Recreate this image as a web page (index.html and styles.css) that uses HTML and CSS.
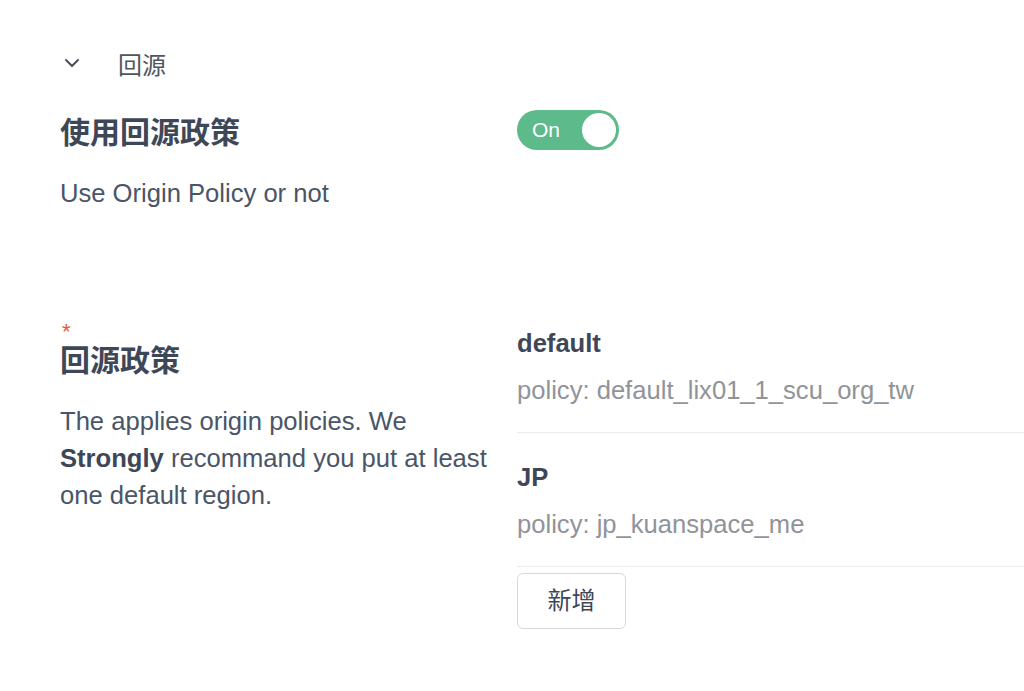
FILE: index.html
```html
<!DOCTYPE html>
<html lang="zh-Hant">
<head>
<meta charset="utf-8">
<link rel="stylesheet" href="styles.css">
</head>
<body>
<div class="page">
  <div class="section-header">
    <svg class="chevron" width="16" height="10" viewBox="0 0 16 10"><path d="M2 2 L8 8 L14 2" fill="none" stroke="#4a4f57" stroke-width="2" stroke-linecap="round" stroke-linejoin="round"/></svg>
    <span class="section-title">回源</span>
  </div>

  <div class="row row-toggle">
    <div class="label-col">
      <div class="heading">使用回源政策</div>
      <div class="desc">Use Origin Policy or not</div>
    </div>
    <div class="field-col">
      <div class="switch">
        <span class="switch-text">On</span>
        <span class="switch-knob"></span>
      </div>
    </div>
  </div>

  <div class="row row-policies">
    <div class="label-col">
      <div class="required">*</div>
      <div class="heading">回源政策</div>
      <div class="desc"><span>The applies origin policies. We</span> <b>Strongly</b> <span>recommand you put at least</span> <span>one default region.</span></div>
    </div>
    <div class="field-col">
      <div class="policy-item first">
        <div class="policy-name">default</div>
        <div class="policy-value">policy: default_lix01_1_scu_org_tw</div>
      </div>
      <div class="policy-item">
        <div class="policy-name">JP</div>
        <div class="policy-value">policy: jp_kuanspace_me</div>
      </div>
      <button class="add-btn">新增</button>
    </div>
  </div>
</div>
</body>
</html>
```
FILE: styles.css
```css
html, body {
  margin: 0;
  padding: 0;
  background: #ffffff;
}
body {
  font-family: "Liberation Sans", "Noto Sans CJK TC", sans-serif;
  color: #4a5568;
  overflow: hidden;
}
.page {
  padding-left: 60px;
}
.section-header {
  display: flex;
  align-items: center;
  height: 30px;
  margin-top: 48px;
}
.chevron {
  margin-left: 4px;
  margin-right: 38px;
}
.section-title {
  font-family: "Noto Sans CJK TC", sans-serif;
  font-size: 24px;
  color: #50555c;
}
.row {
  display: flex;
}
.label-col {
  width: 442px;
  margin-right: 15px;
  flex-shrink: 0;
}
.field-col {
  flex: 1;
}
.row-toggle {
  margin-top: 33px;
}
.row-toggle .switch {
  margin-top: -1px;
}
.heading {
  font-family: "Liberation Sans", "Noto Sans CJK TC", sans-serif;
  font-size: 30px;
  line-height: 44px;
  font-weight: 700;
  color: #3e4757;
}
.desc {
  margin-top: 20px;
  font-size: 25.6px;
  line-height: 37px;
  color: #4a5568;
}
.desc b {
  color: #3e4757;
}
.switch {
  width: 102px;
  height: 40px;
  border-radius: 20px;
  background: #5dba8a;
  display: flex;
  align-items: center;
  justify-content: space-between;
  box-sizing: border-box;
  padding: 0 3px 0 15px;
}
.switch-text {
  color: #ffffff;
  font-size: 21px;
}
.switch-knob {
  width: 34px;
  height: 34px;
  border-radius: 50%;
  background: #ffffff;
}
.row-policies {
  margin-top: 109px;
}
.required {
  color: #e05a3c;
  font-size: 22px;
  line-height: 22px;
  height: 18px;
  margin-left: 2px;
}
.policy-item {
  padding: 26px 0 24px;
  border-bottom: 1px solid #e9ebee;
}
.policy-item.first {
  padding-top: 4px;
}
.policy-name {
  font-size: 25.6px;
  line-height: 36px;
  font-weight: 700;
  color: #3e4757;
}
.policy-value {
  margin-top: 11px;
  font-size: 25.6px;
  line-height: 36px;
  color: #909399;
}
.add-btn {
  margin-top: 6px;
  width: 109px;
  height: 56px;
  box-sizing: border-box;
  background: #ffffff;
  border: 1px solid #d6d9dd;
  border-radius: 6px;
  font-family: "Noto Sans CJK TC", sans-serif;
  font-size: 24px;
  color: #3e4757;
  padding: 0 0 5px;
}
```
